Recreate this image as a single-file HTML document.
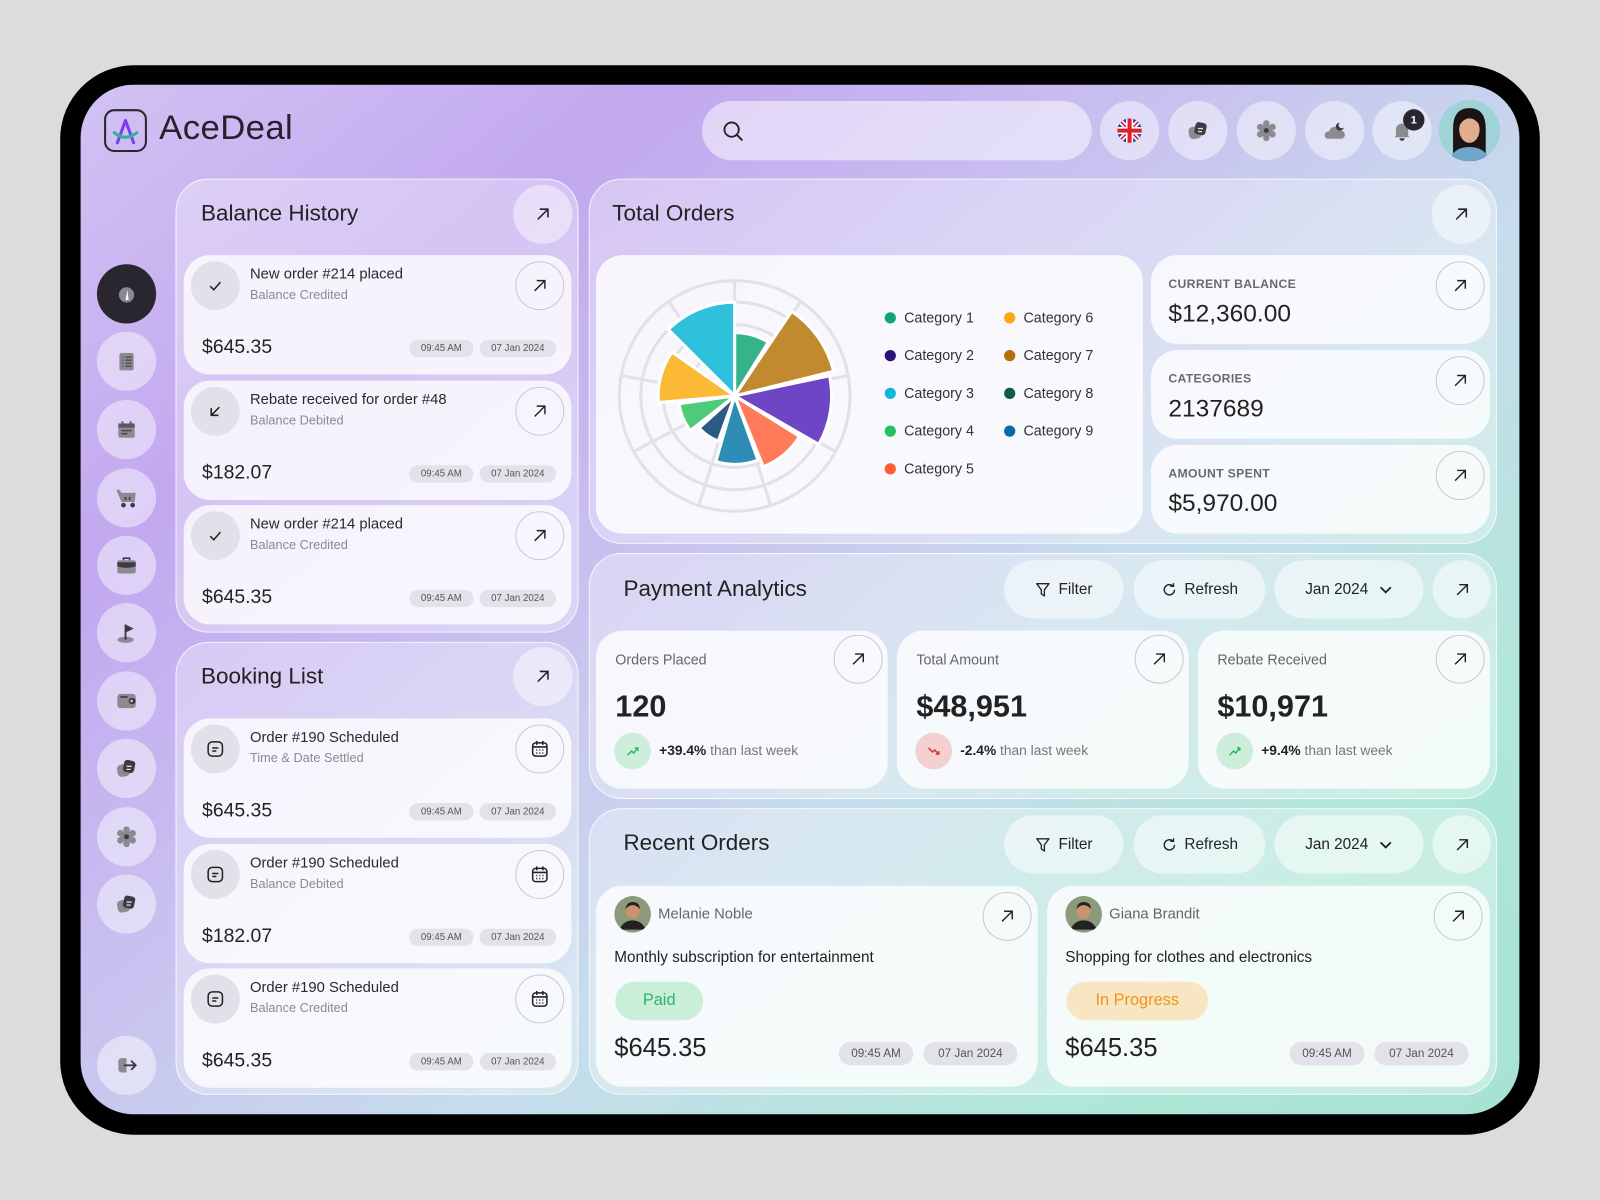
<!DOCTYPE html>
<html><head><meta charset="utf-8"><style>
*{box-sizing:border-box;margin:0;padding:0}
html,body{width:1600px;height:1200px;overflow:hidden;background:#dcdcdd;font-family:"Liberation Sans",sans-serif;color:#222}
#w{position:absolute;left:0;top:0;width:1568px;height:1176px;transform:scale(1.020408);transform-origin:0 0;background:#dcdcdd}
.a{position:absolute}
.dev{left:59px;top:64px;width:1450px;height:1048px;border-radius:72px;background:#000}
.scr{left:79px;top:83px;width:1410px;height:1009px;border-radius:52px;overflow:hidden;background:linear-gradient(140deg,#d2c2f3 0%,#c2a8ef 22%,#c9bff0 40%,#c7dcec 60%,#b0e7d8 82%,#a6e2d2 100%)}
.panel{border-radius:32px;background:rgba(255,255,255,.32);border:1.5px solid rgba(255,255,255,.75)}
.card{border-radius:26px;background:rgba(255,255,255,.78)}
.circ{border-radius:50%;display:flex;align-items:center;justify-content:center}
.glass{background:rgba(255,255,255,.45)}
.ol{border:1.2px solid #c9c9cf;background:transparent}
.h{font-size:22px;color:#222;white-space:nowrap}
.t{font-size:14.5px;color:#2a2a2a;white-space:nowrap}
.s{font-size:12.5px;color:#8a8a92;white-space:nowrap}
.amt{font-size:19px;color:#222;white-space:nowrap}
.pill{height:17px;border-radius:9px;background:#e3e2ea;font-size:9.5px;color:#555;display:flex;align-items:center;justify-content:center}
.btn{height:57px;border-radius:29px;background:rgba(255,255,255,.5);display:flex;align-items:center;justify-content:center;font-size:15px;color:#222;gap:7px}
.lbl{font-size:12px;color:#6a6a70;font-weight:bold;letter-spacing:.3px}
.val{font-size:24px;color:#222}
.leg{font-size:14px;color:#333;display:flex;align-items:center;gap:8px;white-space:nowrap}
.dot{width:11px;height:11px;border-radius:50%}
</style></head><body><div id="w">
<div class="a dev"></div>
<div class="a scr"></div>

<div class="a" style="left:102px;top:107px;width:42px;height:42px;border:2px solid #2a2630;border-radius:10px">
<svg width="38" height="38" viewBox="0 0 38 38"><path d="M11 31L19 9L27 31" stroke="#7b3df0" stroke-width="3" fill="none" stroke-linecap="round" stroke-linejoin="round"/><path d="M8 21Q19 30 30 21" stroke="#2fb39a" stroke-width="3" fill="none" stroke-linecap="round"/></svg></div>
<div class="a" style="left:156px;top:106px;font-size:34px;color:#25222b;letter-spacing:.4px">AceDeal</div>

<div class="a" style="left:688px;top:99px;width:382px;height:58px;border-radius:29px;background:rgba(255,255,255,.5)"></div>
<svg class="a" style="left:707px;top:117px" width="22" height="22" viewBox="0 0 22 22"><circle cx="10" cy="10" r="7" stroke="#222" stroke-width="1.8" fill="none"/><path d="M15 15L20 20" stroke="#222" stroke-width="1.8" stroke-linecap="round"/></svg>

<div class="a circ glass" style="left:1078px;top:99px;width:58px;height:58px"><svg width="24" height="24" viewBox="0 0 24 24"><clipPath id="fc"><circle cx="12" cy="12" r="12"/></clipPath><g clip-path="url(#fc)"><rect width="24" height="24" fill="#1f3f9a"/><path d="M0 0L24 24M24 0L0 24" stroke="#fff" stroke-width="5"/><path d="M0 0L24 24M24 0L0 24" stroke="#e0202f" stroke-width="1.6"/><path d="M12 0V24M0 12H24" stroke="#fff" stroke-width="7"/><path d="M12 0V24M0 12H24" stroke="#e0202f" stroke-width="4"/></g></svg></div>
<div class="a circ glass" style="left:1145px;top:99px;width:58px;height:58px"><svg width="22" height="22" viewBox="0 0 22 22"><rect x="2" y="7" width="12" height="12" rx="4" fill="#8a8a90" transform="rotate(-10 8 13)"/><rect x="8" y="3" width="11" height="12" rx="3" fill="#3d3b42" transform="rotate(12 13 9)"/><path d="M11 9h5M11 12h4" stroke="#ddd" stroke-width="1.3"/></svg></div>
<div class="a circ glass" style="left:1212px;top:99px;width:58px;height:58px"><svg width="22" height="22" viewBox="0 0 22 22"><g fill="#8a8a90"><circle cx="11" cy="11" r="6"/><circle cx="11" cy="4" r="3.2"/><circle cx="11" cy="18" r="3.2"/><circle cx="5" cy="7.5" r="3.2"/><circle cx="17" cy="7.5" r="3.2"/><circle cx="5" cy="14.5" r="3.2"/><circle cx="17" cy="14.5" r="3.2"/></g><circle cx="11" cy="11" r="2.4" fill="#3d3b42"/></svg></div>
<div class="a circ glass" style="left:1279px;top:99px;width:58px;height:58px"><svg width="24" height="22" viewBox="0 0 24 22"><path d="M5 19h13a4 4 0 0 0 0-8 6 6 0 0 0-11.5 1A3.5 3.5 0 0 0 5 19z" fill="#8a8a90"/><path d="M17 3a4 4 0 1 0 4 5 3.2 3.2 0 1 1-4-5z" fill="#3d3b42"/></svg></div>
<div class="a circ glass" style="left:1345px;top:99px;width:58px;height:58px"><svg width="22" height="22" viewBox="0 0 22 22"><path d="M5 16V10a6 6 0 0 1 12 0v6l1.5 1.5h-15z" fill="#8a8a90"/><path d="M8.5 18.5a2.5 2.5 0 0 0 5 0" fill="#3d3b42"/></svg></div>
<div class="a circ" style="left:1375px;top:107px;width:21px;height:21px;background:#2a2630;color:#fff;font-size:11px;font-weight:bold">1</div>
<div class="a" style="left:1410px;top:98px;width:60px;height:60px;border-radius:50%;overflow:hidden;background:#8fcfd6"><svg width="60" height="60" viewBox="0 0 60 60"><rect width="60" height="60" fill="#9fd3d8"/><path d="M14 60V28Q14 8 30 8Q46 8 46 28V60z" fill="#1b1413"/><ellipse cx="30" cy="29" rx="10" ry="13" fill="#e1ad8e"/><path d="M10 60Q14 46 30 46Q46 46 50 60z" fill="#6fa6c9"/><path d="M19 28Q21 12 30 14Q40 14 41 26Q36 18 30 18Q23 18 19 28z" fill="#1b1413"/></svg></div>

<div class="a circ" style="left:95px;top:259px;width:58px;height:58px;background:#2a2630"><svg width="20" height="20" viewBox="0 0 20 20"><circle cx="10" cy="11" r="7.5" fill="#8a8890"/><path d="M9 16L11 6L12 16z" fill="#fff"/></svg></div>
<div class="a circ glass" style="left:95px;top:325px;width:58px;height:58px"><svg width="20" height="20" viewBox="0 0 20 20"><rect x="3" y="2" width="14" height="17" rx="2" fill="#8a8a90"/><path d="M6 6h1M9 6h6M6 9h1M9 9h6M6 12h1M9 12h6M6 15h1M9 15h6" stroke="#4a484f" stroke-width="1.3"/></svg></div>
<div class="a circ glass" style="left:95px;top:392px;width:58px;height:58px"><svg width="20" height="20" viewBox="0 0 20 20"><rect x="2" y="4" width="16" height="14" rx="2" fill="#8a8a90"/><rect x="2" y="4" width="16" height="4" fill="#5a585f"/><path d="M6 2v4M14 2v4" stroke="#5a585f" stroke-width="2"/><path d="M5 11h10M5 14h6" stroke="#4a484f" stroke-width="1.5"/></svg></div>
<div class="a circ glass" style="left:95px;top:459px;width:58px;height:58px"><svg width="22" height="20" viewBox="0 0 22 20"><path d="M1 2h3l2 3h14l-1 9H6z" fill="#8a8a90"/><circle cx="8" cy="17" r="2.3" fill="#3d3b42"/><circle cx="17" cy="17" r="2.3" fill="#3d3b42"/><path d="M10 9v3M14 9v3" stroke="#3d3b42" stroke-width="1.5"/></svg></div>
<div class="a circ glass" style="left:95px;top:525px;width:58px;height:58px"><svg width="22" height="20" viewBox="0 0 22 20"><rect x="2" y="5" width="18" height="13" rx="2" fill="#8a8a90"/><path d="M2 7h18v4Q11 14 2 11z" fill="#3d3b42"/><path d="M8 5V3h6v2" stroke="#3d3b42" stroke-width="1.6" fill="none"/></svg></div>
<div class="a circ glass" style="left:95px;top:591px;width:58px;height:58px"><svg width="22" height="22" viewBox="0 0 22 22"><ellipse cx="10" cy="18" rx="8" ry="3" fill="#8a8a90"/><path d="M10 18V3" stroke="#3d3b42" stroke-width="1.8"/><path d="M10 3l8 4-8 4z" fill="#3d3b42"/></svg></div>
<div class="a circ glass" style="left:95px;top:658px;width:58px;height:58px"><svg width="22" height="20" viewBox="0 0 22 20"><rect x="2" y="3" width="18" height="14" rx="3" fill="#8a8a90"/><path d="M5 6h7" stroke="#3d3b42" stroke-width="1.5"/><rect x="13" y="7" width="7" height="6" rx="3" fill="#3d3b42"/><circle cx="16" cy="10" r="1.2" fill="#ddd"/></svg></div>
<div class="a circ glass" style="left:95px;top:724px;width:58px;height:58px"><svg width="22" height="22" viewBox="0 0 22 22"><rect x="2" y="7" width="12" height="12" rx="4" fill="#8a8a90" transform="rotate(-10 8 13)"/><rect x="8" y="3" width="11" height="12" rx="3" fill="#3d3b42" transform="rotate(12 13 9)"/><path d="M11 9h5M11 12h4" stroke="#ddd" stroke-width="1.3"/></svg></div>
<div class="a circ glass" style="left:95px;top:791px;width:58px;height:58px"><svg width="22" height="22" viewBox="0 0 22 22"><g fill="#8a8a90"><circle cx="11" cy="11" r="6"/><circle cx="11" cy="4" r="3.2"/><circle cx="11" cy="18" r="3.2"/><circle cx="5" cy="7.5" r="3.2"/><circle cx="17" cy="7.5" r="3.2"/><circle cx="5" cy="14.5" r="3.2"/><circle cx="17" cy="14.5" r="3.2"/></g><circle cx="11" cy="11" r="2.4" fill="#3d3b42"/></svg></div>
<div class="a circ glass" style="left:95px;top:857px;width:58px;height:58px"><svg width="22" height="22" viewBox="0 0 22 22"><rect x="2" y="7" width="12" height="12" rx="4" fill="#8a8a90" transform="rotate(-10 8 13)"/><rect x="8" y="3" width="11" height="12" rx="3" fill="#3d3b42" transform="rotate(12 13 9)"/><path d="M11 9h5M11 12h4" stroke="#ddd" stroke-width="1.3"/></svg></div>
<div class="a circ glass" style="left:95px;top:1015px;width:58px;height:58px"><svg width="22" height="20" viewBox="0 0 22 20"><path d="M11 3H6a3 3 0 0 0-3 3v8a3 3 0 0 0 3 3h5z" fill="#8a8a90"/><path d="M9 10h11M16 6l4 4-4 4" stroke="#3d3b42" stroke-width="1.8" fill="none" stroke-linecap="round"/></svg></div>

<div class="a panel" style="left:172px;top:175px;width:395px;height:445px"></div>
<div class="a h" style="left:197px;top:196px">Balance History</div>
<div class="a circ glass" style="left:503px;top:181px;width:58px;height:58px"><svg width="16" height="16" viewBox="0 0 16 16"><path d="M3 13L13 3M5 3h8v8" stroke="#222" stroke-width="1.5" fill="none"/></svg></div>

<div class="a panel" style="left:172px;top:629px;width:395px;height:444px"></div>
<div class="a h" style="left:197px;top:650px">Booking List</div>
<div class="a circ glass" style="left:503px;top:634px;width:58px;height:58px"><svg width="16" height="16" viewBox="0 0 16 16"><path d="M3 13L13 3M5 3h8v8" stroke="#222" stroke-width="1.5" fill="none"/></svg></div>

<div id="items"></div>

<div class="a panel" style="left:577px;top:175px;width:890px;height:358px"></div>
<div class="a h" style="left:600px;top:196px">Total Orders</div>
<div class="a circ glass" style="left:1403px;top:181px;width:58px;height:58px"><svg width="16" height="16" viewBox="0 0 16 16"><path d="M3 13L13 3M5 3h8v8" stroke="#222" stroke-width="1.5" fill="none"/></svg></div>
<div class="a card" style="left:584px;top:250px;width:536px;height:273px;background:rgba(255,255,255,.82)"></div>
<svg class="a" style="left:605px;top:273px" width="230" height="230" viewBox="0 0 230 230">
<g stroke="#e2e1e8" stroke-width="3" fill="none"><circle cx="115" cy="115" r="113"/><circle cx="115" cy="115" r="92"/><circle cx="115" cy="115" r="70"/><circle cx="115" cy="115" r="47"/>
<path d="M115 2V68M180 22L142 77M227 95L161 107M215 170L156 139M150 222L131 161M80 222L99 161M15 170L74 139M3 95L69 107M50 22L88 77"/></g>
<g stroke="#fff" stroke-width="3" stroke-linejoin="round">
<path d="M115 115L49.95 49.95A92 92 0 0 1 115 23Z" fill="#2fc1dc"/>
<path d="M115 115L115 53A62 62 0 0 1 147.9 62.4Z" fill="#35b38a"/>
<path d="M115 115L170.9 32.1A100 100 0 0 1 212 90.8Z" fill="#c28a30"/>
<path d="M115 115L207.9 95.2A95 95 0 0 1 197.3 162.5Z" fill="#6e45c4"/>
<path d="M115 115L178.6 154.7A75 75 0 0 1 143.1 184.5Z" fill="#ff7a59"/>
<path d="M115 115L137.9 178A67 67 0 0 1 96.5 179.4Z" fill="#2f8db5"/>
<path d="M115 115L98.9 159.2A47 47 0 0 1 80.1 146.4Z" fill="#2c5a86"/>
<path d="M115 115L71.7 148.9A55 55 0 0 1 60.5 122.6Z" fill="#4ecb7a"/>
<path d="M115 115L40.3 121.5A75 75 0 0 1 53.6 72Z" fill="#fbb935"/>
</g></svg>
<div class="a leg" style="left:867px;top:303px"><span class="dot" style="background:#13a37a"></span>Category 1</div>
<div class="a leg" style="left:867px;top:340px"><span class="dot" style="background:#2b1374"></span>Category 2</div>
<div class="a leg" style="left:867px;top:377px"><span class="dot" style="background:#12b6db"></span>Category 3</div>
<div class="a leg" style="left:867px;top:414px"><span class="dot" style="background:#22c064"></span>Category 4</div>
<div class="a leg" style="left:867px;top:451px"><span class="dot" style="background:#ff5c36"></span>Category 5</div>
<div class="a leg" style="left:984px;top:303px"><span class="dot" style="background:#fca80e"></span>Category 6</div>
<div class="a leg" style="left:984px;top:340px"><span class="dot" style="background:#b86e0b"></span>Category 7</div>
<div class="a leg" style="left:984px;top:377px"><span class="dot" style="background:#0f5c48"></span>Category 8</div>
<div class="a leg" style="left:984px;top:414px"><span class="dot" style="background:#0a6ba3"></span>Category 9</div>

<div class="a card" style="left:1128px;top:250px;width:332px;height:87px"></div>
<div class="a lbl" style="left:1145px;top:271px">CURRENT BALANCE</div><div class="a val" style="left:1145px;top:294px">$12,360.00</div>
<div class="a card" style="left:1128px;top:343px;width:332px;height:87px"></div>
<div class="a lbl" style="left:1145px;top:364px">CATEGORIES</div><div class="a val" style="left:1145px;top:387px">2137689</div>
<div class="a card" style="left:1128px;top:436px;width:332px;height:87px"></div>
<div class="a lbl" style="left:1145px;top:457px">AMOUNT SPENT</div><div class="a val" style="left:1145px;top:480px">$5,970.00</div>
<div class="a circ ol" style="left:1407px;top:256px;width:48px;height:48px"><svg width="16" height="16" viewBox="0 0 16 16"><path d="M3 13L13 3M5 3h8v8" stroke="#222" stroke-width="1.4" fill="none"/></svg></div>
<div class="a circ ol" style="left:1407px;top:349px;width:48px;height:48px"><svg width="16" height="16" viewBox="0 0 16 16"><path d="M3 13L13 3M5 3h8v8" stroke="#222" stroke-width="1.4" fill="none"/></svg></div>
<div class="a circ ol" style="left:1407px;top:442px;width:48px;height:48px"><svg width="16" height="16" viewBox="0 0 16 16"><path d="M3 13L13 3M5 3h8v8" stroke="#222" stroke-width="1.4" fill="none"/></svg></div>

<div class="a panel" style="left:577px;top:542px;width:890px;height:241px"></div>
<div class="a h" style="left:611px;top:564px">Payment Analytics</div>
<div class="a panel" style="left:577px;top:792px;width:890px;height:281px"></div>
<div class="a h" style="left:611px;top:813px">Recent Orders</div>
<div id="btns"></div>

<div id="pay"></div>
<div id="rec"></div>

<script>
var AR='<svg width="16" height="16" viewBox="0 0 16 16"><path d="M3 13L13 3M5 3h8v8" stroke="#222" stroke-width="1.4" fill="none"/></svg>';
var CHECK='<svg width="16" height="16" viewBox="0 0 16 16"><path d="M3 8.5L6.5 12L13 4.5" stroke="#222" stroke-width="1.5" fill="none"/></svg>';
var DOWN='<svg width="16" height="16" viewBox="0 0 16 16"><path d="M12 4L4 12M4 5v7h7" stroke="#222" stroke-width="1.5" fill="none"/></svg>';
var DOC='<svg width="20" height="20" viewBox="0 0 20 20"><rect x="3" y="3" width="14" height="14" rx="4" stroke="#222" stroke-width="1.5" fill="none"/><path d="M7 9h6M7 12h4" stroke="#222" stroke-width="1.5"/></svg>';
var CAL='<svg width="20" height="20" viewBox="0 0 20 20"><rect x="3" y="4" width="14" height="13" rx="3" stroke="#222" stroke-width="1.5" fill="none"/><path d="M7 2v4M13 2v4M3 8h14" stroke="#222" stroke-width="1.5"/><path d="M6.5 11h1M9.5 11h1M12.5 11h1M6.5 14h1M9.5 14h1M12.5 14h1" stroke="#222" stroke-width="1.5"/></svg>';
function item(T,icon,title,sub,amt,right){
return '<div class="a card" style="left:180px;top:'+T+'px;width:380px;height:117px"></div>'+
'<div class="a circ" style="left:187px;top:'+(T+6)+'px;width:48px;height:48px;background:#e2e0e8">'+icon+'</div>'+
'<div class="a t" style="left:245px;top:'+(T+11)+'px">'+title+'</div>'+
'<div class="a s" style="left:245px;top:'+(T+32)+'px">'+sub+'</div>'+
'<div class="a circ ol" style="left:505px;top:'+(T+6)+'px;width:48px;height:48px">'+right+'</div>'+
'<div class="a amt" style="left:198px;top:'+(T+80)+'px">'+amt+'</div>'+
'<div class="a pill" style="left:401px;top:'+(T+83)+'px;width:63px">09:45 AM</div>'+
'<div class="a pill" style="left:470px;top:'+(T+83)+'px;width:75px">07 Jan 2024</div>';}
var h='';
h+=item(250,CHECK,'New order #214 placed','Balance Credited','$645.35',AR);
h+=item(373,DOWN,'Rebate received for order #48','Balance Debited','$182.07',AR);
h+=item(495,CHECK,'New order #214 placed','Balance Credited','$645.35',AR);
h+=item(704,DOC,'Order #190 Scheduled','Time &amp; Date Settled','$645.35',CAL);
h+=item(827,DOC,'Order #190 Scheduled','Balance Debited','$182.07',CAL);
h+=item(949,DOC,'Order #190 Scheduled','Balance Credited','$645.35',CAL);
document.getElementById('items').outerHTML=h;

var FIL='<svg width="16" height="16" viewBox="0 0 16 16"><path d="M2 2h12L9.5 8v6l-3-2V8z" stroke="#222" stroke-width="1.3" fill="none" stroke-linejoin="round"/></svg>';
var REF='<svg width="16" height="16" viewBox="0 0 16 16"><path d="M13 8a5 5 0 1 1-1.5-3.6M12 1.5v3h-3" stroke="#222" stroke-width="1.4" fill="none"/></svg>';
var CHV='<svg width="14" height="14" viewBox="0 0 14 14"><path d="M2 4.5L7 9.5L12 4.5" stroke="#222" stroke-width="1.8" fill="none"/></svg>';
var b='';
[549,799].forEach(function(y){
b+='<div class="a btn" style="left:984px;top:'+y+'px;width:117px">'+FIL+'Filter</div>';
b+='<div class="a btn" style="left:1111px;top:'+y+'px;width:129px">'+REF+'Refresh</div>';
b+='<div class="a btn" style="left:1249px;top:'+y+'px;width:146px;gap:10px">Jan 2024 '+CHV+'</div>';
b+='<div class="a btn" style="left:1404px;top:'+y+'px;width:57px">'+AR+'</div>';});
document.getElementById('btns').outerHTML=b;

var UP='<svg width="14" height="14" viewBox="0 0 14 14"><path d="M2 11L6 7L8 9L12 4M9 4h3v3" stroke="#2bb55e" stroke-width="1.4" fill="none"/></svg>';
var DN='<svg width="14" height="14" viewBox="0 0 14 14"><path d="M2 4L6 8L8 6L12 10M9 10h3V7" stroke="#d42a2a" stroke-width="1.4" fill="none"/></svg>';
function pay(L,lab,val,pct,up){
return '<div class="a card" style="left:'+L+'px;top:618px;width:286px;height:155px"></div>'+
'<div class="a" style="left:'+(L+19)+'px;top:638px;font-size:14px;color:#666">'+lab+'</div>'+
'<div class="a circ ol" style="left:'+(L+233)+'px;top:622px;width:48px;height:48px">'+AR+'</div>'+
'<div class="a" style="left:'+(L+19)+'px;top:676px;font-size:30px;font-weight:bold;color:#222">'+val+'</div>'+
'<div class="a circ" style="left:'+(L+18)+'px;top:718px;width:36px;height:36px;background:'+(up?'#cdeedb':'#f3cfd0')+'">'+(up?UP:DN)+'</div>'+
'<div class="a" style="left:'+(L+62)+'px;top:728px;font-size:13.5px;color:#777;white-space:nowrap"><b style="color:#222">'+pct+'</b> than last week</div>';}
document.getElementById('pay').outerHTML=pay(584,'Orders Placed','120','+39.4%',1)+pay(879,'Total Amount','$48,951','-2.4%',0)+pay(1174,'Rebate Received','$10,971','+9.4%',1);

function av(c){return '<svg width="36" height="36" viewBox="0 0 36 36"><circle cx="18" cy="18" r="18" fill="#8a9a7a"/><circle cx="18" cy="15" r="7" fill="'+c+'"/><path d="M11 13Q12 6 18 6Q25 6 25 13Q22 9 18 9Q14 9 11 13z" fill="#2a1f1a"/><path d="M5 33Q9 24 18 24Q27 24 31 33z" fill="#222"/></svg>';}
function rec(L,name,desc,st,bg,fg,pw){
return '<div class="a card" style="left:'+L+'px;top:868px;width:'+(L==584?433:434)+'px;height:197px"></div>'+
'<div class="a" style="left:'+(L+18)+'px;top:878px;width:36px;height:36px;border-radius:50%;overflow:hidden">'+av('#c9936f')+'</div>'+
'<div class="a" style="left:'+(L+61)+'px;top:888px;font-size:14.5px;color:#666">'+name+'</div>'+
'<div class="a circ ol" style="left:'+(L+379)+'px;top:874px;width:48px;height:48px">'+AR+'</div>'+
'<div class="a" style="left:'+(L+18)+'px;top:930px;font-size:15px;color:#222;white-space:nowrap">'+desc+'</div>'+
'<div class="a" style="left:'+(L+19)+'px;top:962px;width:'+pw+'px;height:38px;border-radius:19px;background:'+bg+';color:'+fg+';font-size:16px;display:flex;align-items:center;justify-content:center">'+st+'</div>'+
'<div class="a" style="left:'+(L+18)+'px;top:1013px;font-size:25px;color:#222">$645.35</div>'+
'<div class="a pill" style="left:'+(L+238)+'px;top:1021px;width:73px;height:23px;border-radius:12px;font-size:11.5px">09:45 AM</div>'+
'<div class="a pill" style="left:'+(L+321)+'px;top:1021px;width:92px;height:23px;border-radius:12px;font-size:11.5px">07 Jan 2024</div>';}
document.getElementById('rec').outerHTML=rec(584,'Melanie Noble','Monthly subscription for entertainment','Paid','#c9efd9','#2fb36b',86)+rec(1026,'Giana Brandit','Shopping for clothes and electronics','In Progress','#f8e6c2','#f0931a',139);
</script>
</div></body></html>
